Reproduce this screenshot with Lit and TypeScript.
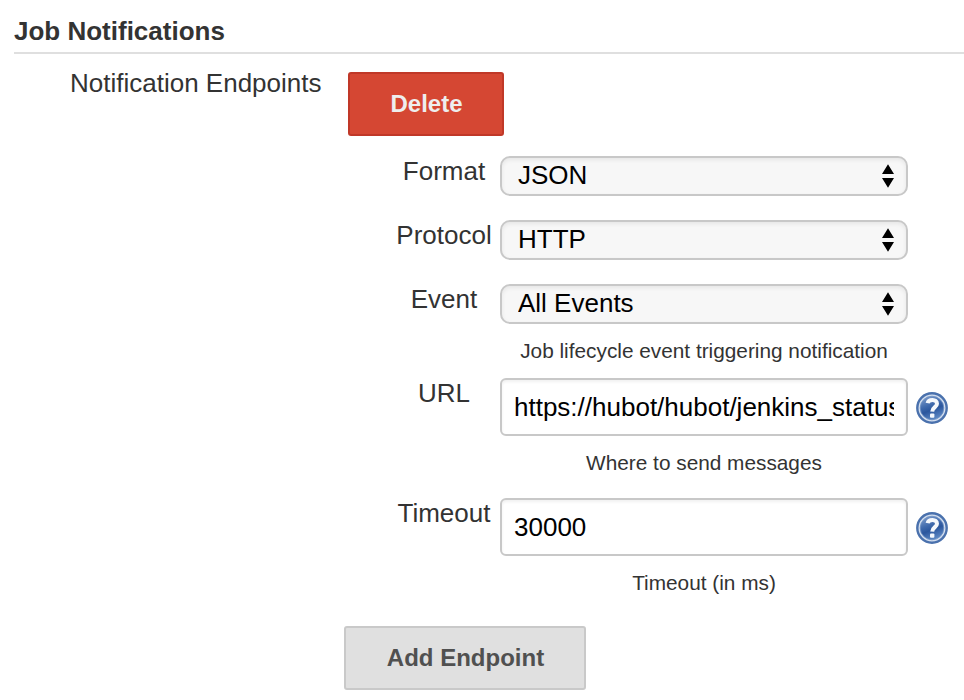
import { LitElement, html, css, nothing } from "lit";
import { customElement, property } from "lit/decorators.js";

@customElement("help-icon")
class HelpIcon extends LitElement {
  static styles = css`
    :host { display: block; width: 32px; height: 32px; }
    .icon { display: block; }
  `;

  render() {
    return html`<svg class="icon" width="32" height="32" viewBox="0 0 32 32" role="img" aria-label="Help">
      <defs>
        <linearGradient id="face" x1="0.2" y1="0" x2="0.6" y2="1">
          <stop offset="0" stop-color="#7d9ccb" />
          <stop offset="0.4" stop-color="#3f69ac" />
          <stop offset="0.6" stop-color="#2b569d" />
          <stop offset="1" stop-color="#5f8ac6" />
        </linearGradient>
      </defs>
      <circle cx="16" cy="16" r="14.7" fill="#d3deee" stroke="#4a71ad" stroke-width="2.4" />
      <circle cx="16" cy="16" r="11.8" fill="url(#face)" stroke="#6c8fc3" stroke-width="0.8" />
      <path d="M11.6 11.2C12.4 6.8 21 6.6 21 11.8C21 15.2 16.4 15.2 16.2 19.6"
        fill="none" stroke="#f4f7fc" stroke-width="4" />
      <rect x="14" y="21.4" width="4.4" height="4.4" rx="1" fill="#f4f7fc" />
    </svg>`;
  }
}

@customElement("form-row")
class FormRow extends LitElement {
  @property() label = "";
  @property() value = "";
  @property() hint = "";
  @property() kind: "select" | "text" = "text";

  static styles = css`
    :host { display: block; }
    .row {
      display: grid;
      grid-template-columns: 96px 408px 32px;
      column-gap: 8px;
      align-items: start;
      margin-left: -4px;
    }
    .label { text-align: center; white-space: nowrap; line-height: 30px; }
    .select { display: grid; grid-template-columns: 1fr; height: 40px; }
    .control {
      box-sizing: border-box;
      width: 100%;
      margin: 0;
      font: inherit;
      color: #000;
      border: 2px solid #c8c8c8;
      outline: none;
    }
    .menu {
      grid-area: 1 / 1;
      appearance: none;
      height: 40px;
      padding: 0 48px 2px 16px;
      border-radius: 10px;
      background: #f7f7f7;
      box-shadow: inset 0 2px 4px rgba(0, 0, 0, 0.07);
    }
    .arrows { grid-area: 1 / 1; justify-self: end; align-self: center; margin-right: 13px; pointer-events: none; }
    .field {
      display: block;
      height: 58px;
      padding: 12px;
      border-radius: 6px;
      background: #fff;
      box-shadow: inset 0 2px 3px rgba(0, 0, 0, 0.06);
    }
    .help { align-self: center; padding-top: 2px; }
    .hint {
      grid-column: 2;
      padding-top: 15px;
      text-align: center;
      font-size: 20.8px;
      line-height: 24px;
      white-space: nowrap;
    }
  `;

  private renderControl() {
    if (this.kind === "select") {
      return html`<div class="select">
        <select class="control menu" aria-label=${this.label}><option>${this.value}</option></select>
        <svg class="arrows" width="14" height="24" viewBox="0 0 14 24">
          <path d="M7 0.3L13 10H1Z M1 14H13L7 23.7Z" />
        </svg>
      </div>`;
    }
    return html`<input class="control field" aria-label=${this.label} .value=${this.value} />
      <help-icon class="help"></help-icon>`;
  }

  render() {
    return html`<div class="row">
      <div class="label">${this.label}</div>
      ${this.renderControl()}
      ${this.hint ? html`<div class="hint">${this.hint}</div>` : nothing}
    </div>`;
  }
}

@customElement("app-root")
class AppRoot extends LitElement {
  static styles = css`
    :host {
      display: block;
      box-sizing: border-box;
      height: 700px;
      padding: 16px 0 0 14px;
      overflow: hidden;
      background: #fff;
      color: #333;
      font: 26px/30px "Liberation Sans", Arial, sans-serif;
    }
    .title {
      margin: 0;
      height: 36px;
      font-size: 26px;
      line-height: 30px;
      border-bottom: 2px solid #dfdfdf;
    }
    .body { display: grid; grid-template-columns: 330px 1fr; align-items: start; }
    .caption { padding: 14px 0 0 56px; white-space: nowrap; }
    .settings { padding-top: 18px; }
    .button {
      display: block;
      box-sizing: border-box;
      height: 64px;
      padding: 0 0 1px;
      border-radius: 3px;
      font: bold 24px/28px "Liberation Sans", Arial, sans-serif;
    }
    .delete { width: 156px; margin-left: 4px; padding-left: 1px; color: #eee; background: #d54733; border: 2px solid #c03828; }
    .add { width: 242px; margin-top: 30px; padding-left: 1px; color: #505050; background: #e0e0e0; border: 2px solid #c9c9c9; }
    .rows { display: grid; padding: 20px 0 0 56px; }
    .r-short { height: 64px; }
    .r-event { height: 94px; }
    .r-url { height: 120px; }
    .r-timeout { height: 98px; }
  `;

  render() {
    return html`
      <h1 class="title">Job Notifications</h1>
      <div class="body">
        <div class="caption">Notification Endpoints</div>
        <div class="settings">
          <button class="button delete">Delete</button>
          <div class="rows">
            <form-row class="r-short" kind="select" label="Format" value="JSON"></form-row>
            <form-row class="r-short" kind="select" label="Protocol" value="HTTP"></form-row>
            <form-row class="r-event" kind="select" label="Event" value="All Events"
              hint="Job lifecycle event triggering notification"></form-row>
            <form-row class="r-url" kind="text" label="URL" value="https://hubot/hubot/jenkins_status"
              hint="Where to send messages"></form-row>
            <form-row class="r-timeout" kind="text" label="Timeout" value="30000"
              hint="Timeout (in ms)"></form-row>
          </div>
          <button class="button add">Add Endpoint</button>
        </div>
      </div>
    `;
  }
}
